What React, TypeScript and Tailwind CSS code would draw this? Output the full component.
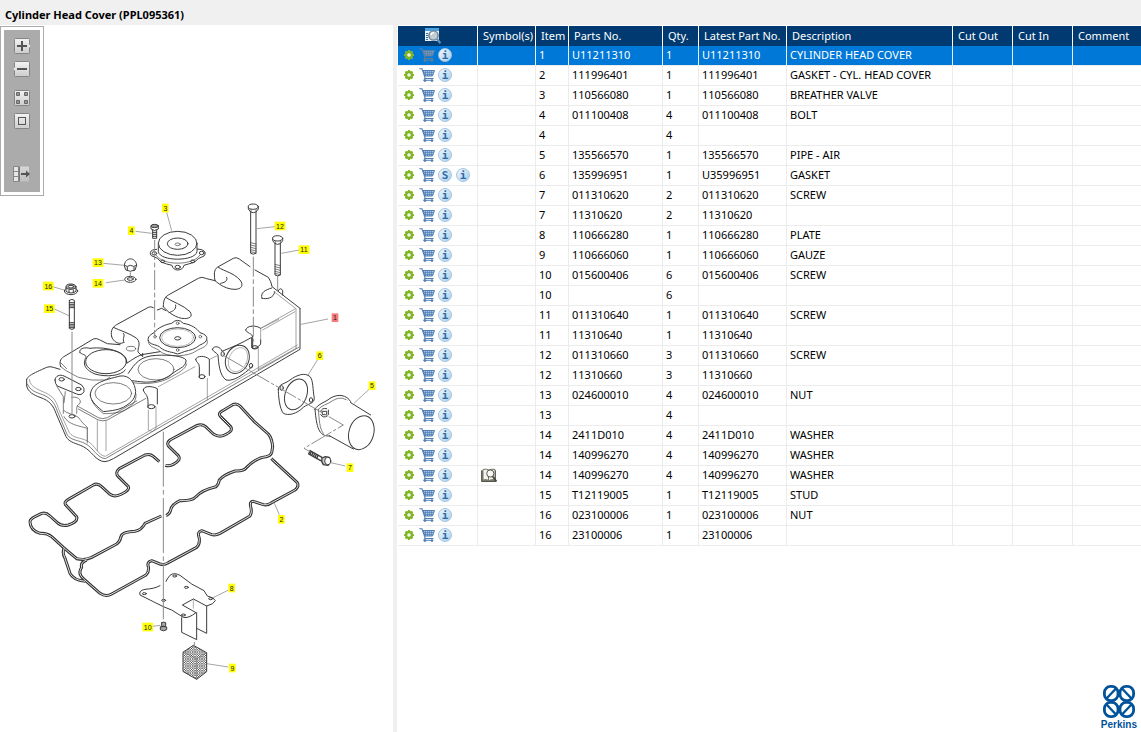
import { useState } from 'react'

type Part = {
  item: string
  partNo: string
  qty: string
  latest: string
  desc: string
  superseded?: boolean
  symbol?: boolean
}

const parts: Part[] = [
  { item: '1', partNo: 'U11211310', qty: '1', latest: 'U11211310', desc: 'CYLINDER HEAD COVER' },
  { item: '2', partNo: '111996401', qty: '1', latest: '111996401', desc: 'GASKET - CYL. HEAD COVER' },
  { item: '3', partNo: '110566080', qty: '1', latest: '110566080', desc: 'BREATHER VALVE' },
  { item: '4', partNo: '011100408', qty: '4', latest: '011100408', desc: 'BOLT' },
  { item: '4', partNo: '', qty: '4', latest: '', desc: '' },
  { item: '5', partNo: '135566570', qty: '1', latest: '135566570', desc: 'PIPE - AIR' },
  { item: '6', partNo: '135996951', qty: '1', latest: 'U35996951', desc: 'GASKET', superseded: true },
  { item: '7', partNo: '011310620', qty: '2', latest: '011310620', desc: 'SCREW' },
  { item: '7', partNo: '11310620', qty: '2', latest: '11310620', desc: '' },
  { item: '8', partNo: '110666280', qty: '1', latest: '110666280', desc: 'PLATE' },
  { item: '9', partNo: '110666060', qty: '1', latest: '110666060', desc: 'GAUZE' },
  { item: '10', partNo: '015600406', qty: '6', latest: '015600406', desc: 'SCREW' },
  { item: '10', partNo: '', qty: '6', latest: '', desc: '' },
  { item: '11', partNo: '011310640', qty: '1', latest: '011310640', desc: 'SCREW' },
  { item: '11', partNo: '11310640', qty: '1', latest: '11310640', desc: '' },
  { item: '12', partNo: '011310660', qty: '3', latest: '011310660', desc: 'SCREW' },
  { item: '12', partNo: '11310660', qty: '3', latest: '11310660', desc: '' },
  { item: '13', partNo: '024600010', qty: '4', latest: '024600010', desc: 'NUT' },
  { item: '13', partNo: '', qty: '4', latest: '', desc: '' },
  { item: '14', partNo: '2411D010', qty: '4', latest: '2411D010', desc: 'WASHER' },
  { item: '14', partNo: '140996270', qty: '4', latest: '140996270', desc: 'WASHER' },
  { item: '14', partNo: '140996270', qty: '4', latest: '140996270', desc: 'WASHER', symbol: true },
  { item: '15', partNo: 'T12119005', qty: '1', latest: 'T12119005', desc: 'STUD' },
  { item: '16', partNo: '023100006', qty: '1', latest: '023100006', desc: 'NUT' },
  { item: '16', partNo: '23100006', qty: '1', latest: '23100006', desc: '' },
]

const columns = ['Symbol(s)', 'Item', 'Parts No.', 'Qty.', 'Latest Part No.', 'Description', 'Cut Out', 'Cut In', 'Comment']

// label, centre x, centre y, leader line
const callouts: [string, number, number, string][] = [
  ['3', 496, 624, 'M500 637L515 692'],
  ['4', 394, 692, 'M407 694L455 700'],
  ['13', 294, 788, 'M310 790L374 796'],
  ['14', 294, 850, 'M318 848L374 840'],
  ['16', 145, 858, 'M158 860L192 870'],
  ['15', 148, 926, 'M163 927L207 947'],
  ['12', 840, 678, 'M770 686L825 680'],
  ['11', 912, 749, 'M844 760L898 750'],
  ['1', 1005, 953, 'M903 973L984 957'],
  ['6', 959, 1067, 'M952 1080L924 1125'],
  ['5', 1116, 1157, 'M1107 1168L1062 1210'],
  ['7', 1050, 1403, 'M992 1388L1036 1398'],
  ['10', 443, 1881, 'M458 1879L481 1876'],
  ['2', 844, 1558, 'M821 1505L838 1544'],
  ['8', 695, 1764, 'M686 1770L637 1794'],
  ['9', 697, 2004, 'M620 1991L685 2001'],
]

function GearIcon() {
  return (
    <svg viewBox="0 0 12 12" className="h-3 w-3" aria-hidden="true">
      <path
        d="M6 1v10M1 6h10M2.5 2.5l7 7M9.5 2.5l-7 7"
        stroke="#8abb2c"
        strokeWidth="2.2"
      />
      <circle cx="6" cy="6" r="3" fill="none" stroke="#7fb226" strokeWidth="2" />
      <circle cx="6" cy="6" r="1.8" fill="#f2f8e4" />
    </svg>
  )
}

function CartIcon({ muted }: { muted: boolean }) {
  const color = muted ? '#5f7f9f' : '#4f7fb5'
  return (
    <svg viewBox="0 0 16 14" className="h-3.5 w-4" fill="none" stroke={color} aria-hidden="true">
      <path d="M4 2.5H15.5L13.5 8H6z" fill={muted ? '#6f9ccc' : '#a9c6e6'} />
      <path d="M6.5 3v5M8.5 3v5M10.5 3v5M12.5 3v5M4.5 4.5h10M5 6.5h9" strokeWidth=".7" />
      <path d="M.3 .8H3L6.3 10.5H14.5M6.3 9.5L5 12.3H14" strokeWidth="1.1" />
      <circle cx="6" cy="12.6" r=".9" fill={color} />
      <circle cx="13" cy="12.6" r=".9" fill={color} />
    </svg>
  )
}

function Badge({ children }: { children: string }) {
  return (
    <span className="flex h-3.5 w-3.5 items-center justify-center rounded-full border border-[#a3c6e2] bg-linear-to-br from-[#f2f8fd] to-[#a9cdea] font-['DejaVu_Sans_Mono','Liberation_Mono',monospace] text-[11px] leading-none font-bold text-[#2c6ca5]">
      {children}
    </span>
  )
}

function LookupIcon() {
  return (
    <svg viewBox="0 0 16 16" className="h-4 w-4" aria-hidden="true">
      <rect x="0" y="0" width="14" height="13" fill="#e8f3fb" />
      <rect x="0" y="0" width="14" height="3" fill="#4aa3df" />
      <path d="M1 5.5h2M1 7.5h2M1 9.5h2M1 11.5h2" stroke="#2d6ca2" />
      <circle cx="8.5" cy="7.5" r="4.6" fill="#c3ccd3" stroke="#6f7f8c" strokeWidth="1.4" />
      <path d="M6 7.2a3 3 0 0 1 3-2.6" stroke="#fff" fill="none" strokeWidth="1.2" />
      <path d="M12 11L15.4 15.2" stroke="#5e93bf" strokeWidth="2.2" />
    </svg>
  )
}

function BookIcon() {
  return (
    <svg viewBox="0 0 17 15" className="h-[15px] w-[17px]" aria-hidden="true">
      <path d="M.6 2.5V13.5H14.5V2.5" fill="#77776d" stroke="#55554c" />
      <path d="M2 1.5Q5 .5 8 2Q11 .5 14 1.5V12Q11 11 8 12.5Q5 11 2 12z" fill="#f4f4ee" stroke="#77776d" />
      <path d="M7.5 2V12" stroke="#77776d" />
      <circle cx="9.3" cy="5.5" r="3.6" fill="#f7f7f7" stroke="#55554c" />
      <path d="M11.7 8.5L15.5 13.5" stroke="#44443c" strokeWidth="1.8" />
    </svg>
  )
}

function ToolButton({ label, children }: { label: string; children: React.ReactNode }) {
  return (
    <button type="button" aria-label={label} className="block h-4 w-[18px] cursor-pointer">
      <svg viewBox="0 0 18 16" className="h-4 w-[18px]" fill="none" aria-hidden="true">
        <defs>
          <linearGradient id="face" x1="0" y1="0" x2="0" y2="1">
            <stop offset="0" stopColor="#f3f3f3" />
            <stop offset="1" stopColor="#cdcdcd" />
          </linearGradient>
        </defs>
        {children}
      </svg>
    </button>
  )
}

const Face = () => <rect x="1.5" y=".5" width="15" height="15" rx="1" fill="url(#face)" stroke="#858585" />

function Toolbar() {
  return (
    <div className="absolute top-px left-0 border border-[#ababab] bg-white p-[3px]">
      <div className="flex w-9 flex-col items-center bg-[#ababab] pt-2 pb-2.5">
        <div className="flex flex-col gap-[7px]">
          <ToolButton label="Zoom in">
            <Face />
            <path d="M9 3v10M4 8h10" stroke="#555" strokeWidth="2" />
            <path d="M16 6l2 2l-2 2" fill="#eee" stroke="#999" strokeWidth=".6" />
          </ToolButton>
          <ToolButton label="Zoom out">
            <Face />
            <path d="M4 8h10" stroke="#555" strokeWidth="2" />
            <path d="M2 6L0 8l2 2" fill="#eee" stroke="#999" strokeWidth=".6" />
          </ToolButton>
        </div>
        <div className="mt-[13px] flex flex-col gap-[7px]">
          <ToolButton label="Fit to window">
            <Face />
            <path d="M3.5 2.5h3v3h-3zM11.5 2.5h3v3h-3zM3.5 10.5h3v3h-3zM11.5 10.5h3v3h-3z" fill="#999" stroke="#666" />
          </ToolButton>
          <ToolButton label="Actual size">
            <Face />
            <rect x="5.5" y="4.5" width="7" height="7" stroke="#555" />
          </ToolButton>
        </div>
        <div className="mt-[37px]">
          <ToolButton label="Hide parts list">
            <path d="M.5 .5h5v15h-5z" fill="#e6e6e6" stroke="#858585" />
            <path d="M.5 5.5h5M.5 10.5h5" stroke="#858585" />
            <path d="M7 .5h9v15H7z" fill="url(#face)" opacity=".6" />
            <path d="M6.5 .5v15" stroke="#777" />
            <path d="M8 8h7" stroke="#555" strokeWidth="2" />
            <path d="M13 4.5L17 8l-4 3.5z" fill="#555" />
          </ToolButton>
        </div>
      </div>
    </div>
  )
}

function Bolt({ x, y, length }: { x: number; y: number; length: number }) {
  const end = y + length
  return (
    <g>
      <path d={`M${x - 8} ${y + 12}V${end}Q${x} ${end + 5} ${x + 8} ${end}V${y + 12}`} fill="#fff" />
      <path
        d={`M${x - 8} ${end - 32}l16 4M${x - 8} ${end - 25}l16 4M${x - 8} ${end - 18}l16 4M${x - 8} ${end - 11}l16 4M${x - 8} ${end - 5}l16 4`}
        strokeWidth="2"
      />
      <path
        d={`M${x - 15} ${y - 4}V${y + 4}L${x - 8} ${y + 13}Q${x} ${y + 17} ${x + 8} ${y + 13}L${x + 15} ${y + 4}V${y - 4}`}
        fill="#fff"
      />
      <path d={`M${x - 7} ${y + 4}V${y + 12}M${x + 8} ${y + 4}V${y + 12}`} strokeWidth="2" />
      <ellipse cx={x} cy={y - 3} rx="15" ry="8" fill="#fff" />
    </g>
  )
}

const upperSeal =
  'M418 -25L400 -41Q390 -50 375 -45L298 -4Q284 8 295 20L325 50Q330 60 305 72Q285 83 270 73L245 50Q232 38 220 45L145 88Q128 98 140 108L170 140Q175 155 145 165Q125 170 112 158L90 138Q78 126 65 130L45 140Q30 147 30 155Q30 180 60 190Q80 188 95 200L130 232L170 266Q195 272 215 262L290 222Q300 215 303 200Q305 186 345 184Q365 180 375 160L424 138M436 -14Q446 -10 460 -17Q485 -30 475 -43L447 -70Q438 -80 450 -90L530 -133Q545 -140 557 -130L580 -108Q600 -95 620 -108Q640 -118 632 -130L602 -160Q592 -170 608 -178L638 -196Q650 -202 660 -192L702 -146L745 -108Q756 -95 758 -70L755 -52Q752 -42 738 -40Q710 -38 680 -8Q672 4 645 3Q610 15 598 30Q595 45 588 50Q545 60 528 80Q518 93 480 92Q455 103 452 120Q450 132 438 137'

const lowerSeal =
  'M132 235Q126 250 135 265L150 310Q160 330 195 334M200 270Q180 278 185 292Q172 310 190 326L240 370Q258 382 275 372L378 315Q388 305 385 290Q380 275 395 272L420 282Q432 286 445 278L530 232Q540 222 538 205Q530 185 545 182L575 194Q587 197 600 190L690 138Q697 128 692 110Q688 94 700 94L730 104Q742 107 755 98L825 60Q838 50 832 38L754 -34'

function HeadCover() {
  return (
    <g fill="none" stroke="#3c3c3c" strokeWidth="3" strokeLinejoin="round" strokeLinecap="round">
      {/* left and front of the casting */}
      <g transform="translate(60 960)">
        <path d="M20 178C24 168 35 162 80 142Q90 138 100 142L120 148M20 178V198C24 215 40 225 60 232C90 242 100 258 108 280L138 350C148 368 170 370 190 380C215 392 228 425 255 425Q265 424 280 416L840 88V-35" />
        <path d="M28 178C30 195 40 202 66 214C95 225 108 238 116 268L148 338C160 355 180 352 200 362C225 374 235 408 256 409L832 75" strokeWidth="2" stroke="#777" />
        <path d="M22 192C30 212 50 218 68 224C92 234 104 248 112 274L142 345C154 362 176 360 196 371C220 383 232 415 256 416L836 82" strokeWidth="2" />
        <path d="M122 140C116 122 124 114 135 108L220 57Q228 53 238 59L262 71L300 74" />
        <path d="M122 140L138 152L175 172L215 180L255 180L270 172M122 128L140 146" strokeWidth="2" />
        <path d="M180 98C175 88 190 80 210 85C235 82 265 84 290 94C312 102 322 115 320 130C338 118 345 112 365 104L420 95" />
        <path d="M180 98C184 104 198 102 198 112C188 130 192 148 225 162C260 172 302 168 316 150" />
        <ellipse cx="258" cy="125" rx="61" ry="36" />
        <ellipse cx="333" cy="86" rx="14" ry="7" strokeWidth="2" />
        <path d="M275 50C270 30 280 20 290 14L385 -38Q392 -42 400 -37M280 22C300 32 330 40 350 55C365 70 352 85 354 96L368 110V100M275 50C280 65 295 75 310 68M312 68C305 55 318 46 310 40" />
        <path d="M105 180C105 168 120 162 132 168L185 195Q195 205 192 215Q185 228 170 222L112 198Q105 192 105 180Z" fill="#fff" />
        <ellipse cx="125" cy="178" rx="8" ry="5" />
        <ellipse cx="175" cy="207" rx="8" ry="5" />
        <path d="M110 198L130 230V280M136 215L132 248M155 232C170 228 185 238 180 250C165 260 172 268 170 280M132 272C140 282 165 282 175 292C185 305 190 312 202 322V365M132 290C145 315 180 318 202 325" strokeWidth="2" />
        <ellipse cx="156" cy="289" rx="9" ry="5" />
        <path d="M172 258L235 293Q248 299 262 293L350 243M175 267L235 300Q248 305 262 300L378 235" strokeWidth="2" />
        <path d="M232 302V392M258 302V392M202 325V370" strokeWidth="2" stroke="#777" />
        <path d="M325 160C345 130 360 108 410 106C450 104 490 108 498 120C500 138 480 145 465 155C440 175 420 184 390 186C360 188 340 180 325 182" fill="#fff" />
        <path d="M330 186C370 196 425 190 455 170C475 158 495 150 500 132" strokeWidth="2" />
        <ellipse cx="408" cy="148" rx="54" ry="32" strokeWidth="2" />
        <path d="M211 225C212 188 255 180 300 168C330 164 345 190 347 215C345 240 330 250 310 262C290 272 265 273 250 275C235 262 211 245 211 225Z" fill="#fff" />
        <path d="M215 240C225 262 240 272 250 281C275 281 300 278 315 270C335 258 350 245 348 222" strokeWidth="2" />
        <ellipse cx="280" cy="220" rx="55" ry="32" strokeWidth="2" />
        <path d="M415 200L525 140M568 118L590 108" strokeWidth="2" stroke="#777" />
        <path d="M370 210C370 198 392 196 412 206V252M370 210C372 222 384 222 384 245V262" />
        <path d="M385 270V330L397 335L408 325V262" stroke="#777" strokeWidth="2" />
        <ellipse cx="394" cy="260" rx="11" ry="6" />
        <path d="M527 118C530 106 556 106 568 118V166M527 118C528 128 538 128 538 140V172" />
        <path d="M562 175V240" stroke="#777" strokeWidth="2" />
        <ellipse cx="546" cy="170" rx="9" ry="6" />
        <path d="M385 62C380 50 395 42 402 38C415 22 435 14 455 10Q473 -8 490 10C515 14 530 25 540 38Q565 45 560 60C555 72 540 72 530 82C515 92 495 92 485 98Q473 106 460 98C445 95 430 92 418 80C405 72 390 75 385 62Z" fill="#fff" />
        <path d="M385 66C388 85 410 82 420 94C440 112 505 112 530 92C545 82 565 82 562 62" strokeWidth="2" />
        <ellipse cx="473" cy="53" rx="54" ry="30" />
        <ellipse cx="473" cy="53" rx="48" ry="26" strokeWidth="1" />
        <ellipse cx="473" cy="55" rx="9" ry="5" />
        <g strokeWidth="2">
          <circle cx="473" cy="10" r="4" />
          <circle cx="405" cy="50" r="4" />
          <circle cx="541" cy="50" r="4" />
          <circle cx="473" cy="90" r="4" />
        </g>
      </g>

      {/* humps along the back edge */}
      <g transform="translate(60 570)">
        <path d="M430 350C430 328 435 322 445 315L535 265Q545 258 560 266L585 272M437 322C455 335 490 345 510 365C520 380 508 388 485 385C460 380 440 362 430 350M467 345C470 360 455 365 447 368M412 360L425 355L438 362" />
      </g>
      <g transform="translate(600 570)">
        <path d="M45 272C40 245 45 235 55 230L100 205Q108 200 118 207L150 230M165 240L205 262Q214 275 216 290L300 355M55 232C75 245 100 248 120 270C132 285 125 298 105 298C80 298 60 285 45 272M80 262C85 275 70 278 62 280" />
        <path d="M186 325C180 308 195 300 215 294M186 325C200 328 222 325 224 305M235 302Q242 290 248 302V315" />
        <path d="M222 305L288 356V475M182 415L285 357M188 420L285 365" strokeWidth="2" stroke="#777" />
        <path d="M137 420C140 405 170 405 182 415M137 420C140 430 158 430 158 442V475" />
      </g>

      {/* outlet face */}
      <g transform="translate(600 960)">
        <path d="M182 25L236 -2M182 25V60M175 85V150M175 148L290 84" strokeWidth="2" stroke="#777" />
        <path d="M37 88C42 74 62 80 66 94C95 82 125 70 155 52V82M156 140C130 165 100 185 78 180C58 165 56 130 54 105C50 98 40 96 37 88M182 60V72Q170 88 158 85" />
        <ellipse cx="112" cy="118" rx="34" ry="44" transform="rotate(25 112 118)" />
        <ellipse cx="114" cy="119" rx="27" ry="38" transform="rotate(25 114 119)" strokeWidth="1" />
        <ellipse cx="68" cy="102" rx="5" ry="7" />
        <ellipse cx="153" cy="137" rx="5" ry="7" />
        <ellipse cx="165" cy="82" rx="9" ry="5" />
      </g>
    </g>
  )
}

function PartsDiagram() {
  return (
    <svg viewBox="0 75 1179 2121" className="block w-full" role="img" aria-label="Exploded view of the cylinder head cover">
      <defs>
        <pattern id="gauze" width="7" height="7" patternUnits="userSpaceOnUse">
          <path d="M0 0L7 7M7 0L0 7" stroke="#333" strokeWidth="1.6" />
        </pattern>
      </defs>

      <HeadCover />

      {/* cover seal: dark band with a light core */}
      <g transform="translate(60 1410)" fill="none" strokeLinejoin="round">
        <path d={upperSeal} stroke="#333" strokeWidth="9" />
        <path d={lowerSeal} stroke="#333" strokeWidth="9" />
        <path d={upperSeal} stroke="#e2e2e2" strokeWidth="3" />
        <path d={lowerSeal} stroke="#e2e2e2" strokeWidth="3" />
      </g>

      <g fill="none" stroke="#3c3c3c" strokeWidth="3" strokeLinejoin="round" strokeLinecap="round">
        {/* breather valve */}
        <g transform="translate(60 570)">
          <path d="M410 178L398 180Q386 186 394 197L412 205Q420 218 440 222L456 226Q460 240 473 240Q488 240 492 226L505 222Q525 220 535 206L552 198Q562 186 545 179L532 177" fill="#fff" />
          <path d="M415 160V185C420 215 525 215 531 185V160" fill="#fff" />
          <path d="M408 195C425 228 520 228 540 195" strokeWidth="2" />
          <ellipse cx="473" cy="160" rx="58" ry="36" fill="#fff" />
          <ellipse cx="473" cy="161" rx="31" ry="17" />
          <ellipse cx="473" cy="163" rx="8" ry="4" strokeWidth="2" />
          <ellipse cx="403" cy="190" rx="7" ry="5" />
          <ellipse cx="545" cy="189" rx="7" ry="5" />
          <ellipse cx="473" cy="231" rx="8" ry="5" />
          <ellipse cx="428" cy="214" rx="6" ry="4" />
          <ellipse cx="518" cy="214" rx="6" ry="4" />
          <path d="M398 120V145H410V120M393 108V117Q404 126 415 117V108M398 127h12M398 133h12M398 139h12" />
          <ellipse cx="404" cy="108" rx="11" ry="5" fill="#999" />

          {/* cap nut and washer */}
          <path d="M313 226C315 200 347 200 350 226L345 240Q331 248 318 240ZM313 226Q322 233 331 226Q342 233 350 226M322 232V242M342 232V242" fill="#fff" />
          <ellipse cx="331" cy="268" rx="17" ry="9" />
          <ellipse cx="331" cy="267" rx="9" ry="4" />

          {/* flanged nut and stud */}
          <ellipse cx="153" cy="303" rx="20" ry="11" fill="#fff" />
          <path d="M138 292V304Q153 314 168 304V292M147 300V308M160 300V308" />
          <ellipse cx="153" cy="290" rx="15" ry="8" fill="#aaa" />
          <ellipse cx="153" cy="290" rx="8" ry="4" fill="#fff" />
          <path d="M148 331V415Q156 422 163 415V331Q156 325 148 331M148 338h15M148 343h15M148 348h15M148 353h15M148 398h15M148 403h15M148 408h15M148 413h15" />
        </g>

        <Bolt x={760} y={623} length={137} />
        <Bolt x={833} y={718} length={107} />

        {/* outlet gasket, air pipe and its screw */}
        <g transform="translate(600 960)">
          <path d="M235 208C235 192 255 192 270 180C290 165 315 156 330 170C340 180 338 210 343 235C342 252 325 250 310 262C290 282 265 288 250 280C238 265 235 225 235 208Z" />
          <ellipse cx="288" cy="223" rx="32" ry="48" transform="rotate(22 288 223)" />
          <ellipse cx="245" cy="204" rx="5" ry="7" />
          <ellipse cx="333" cy="240" rx="5" ry="7" />
          <path d="M345 268C355 250 375 248 390 235C415 220 440 225 452 245L452 330L390 348C355 350 350 320 345 268Z" fill="#fff" />
          <path d="M355 268C365 255 380 255 398 242C415 232 430 232 442 242M355 268C358 300 358 325 370 340" strokeWidth="2" />
          <path d="M440 240L510 285L470 388L388 346C375 330 368 300 375 285" fill="#fff" stroke="none" />
          <path d="M452 248L512 285M388 347L460 387" />
          <ellipse cx="484" cy="338" rx="37" ry="52" transform="rotate(17 484 338)" fill="#fff" />
          <path d="M362 275Q365 262 380 266M385 270V284M362 284Q370 296 382 288M368 274h12v10h-12z" />
          <path d="M330 392L366 412M326 402L362 422M330 392L326 402M334 394l-4 10M339 397l-4 10M344 400l-4 10M349 403l-4 10M354 406l-4 10" strokeWidth="4" />
          <path d="M366 414L376 410L388 412L392 424L384 436L370 434L365 424Z" fill="#ccc" strokeWidth="4" />
          <ellipse cx="383" cy="423" rx="9" ry="11" fill="#fff" />
        </g>

        {/* baffle plate, screw and gauze block */}
        <g transform="translate(60 1410)">
          <path d="M420 347C405 355 395 356 375 358Q355 362 360 375L400 395L430 410L455 420L490 442Q505 446 528 428L487 405L520 387L560 408Q582 402 586 392Q582 382 562 378L552 362L515 342L480 316Q462 306 450 316Q440 328 438 334" fill="#fff" />
          <path d="M485 443V487L530 509V428M560 408V490L530 475" />
          <path d="M520 387V415" stroke="#888" strokeWidth="2" />
          <ellipse cx="464" cy="318" rx="6" ry="3" />
          <ellipse cx="499" cy="352" rx="6" ry="3" />
          <ellipse cx="373" cy="371" rx="6" ry="3" />
          <ellipse cx="431" cy="391" rx="6" ry="3" />
          <ellipse cx="572" cy="386" rx="6" ry="3" />
          <ellipse cx="490" cy="435" rx="6" ry="3" />
          <path d="M425 458V470H437V458Q431 454 425 458M421 471V479Q431 486 440 479V471Q431 466 421 471" fill="#aaa" />
          <path d="M490 546L520 526L560 548V605L530 628L490 605Z" fill="url(#gauze)" />
          <path d="M490 546L530 566L560 548M530 566V628" strokeWidth="1" />
        </g>
      </g>

      {/* assembly axes */}
      <g fill="none" stroke="#8a8a8a" strokeWidth="3">
        <path d="M464 720V1010M760 770V1025" strokeDasharray="60 8 14 8" />
        <path d="M216 995V1245M833 828V870M391 817V828M583 1926V1945" />
        <path d="M490 1295V1865" strokeDasharray="165 10 14 10" />
        <path d="M668 1065L1030 1275L912 1345L930 1355" strokeDasharray="70 6 10 6" />
      </g>

      {callouts.map(([label, x, y, leader]) => {
        const half = label.length > 1 ? 16 : 10
        return (
          <g key={label}>
            <path d={leader} stroke="#777" strokeWidth="2" />
            <rect x={x - half} y={y - 13} width={half * 2} height="26" fill={label === '1' ? '#fa7a7a' : '#ffff00'} />
            <text
              x={x}
              y={y + 8}
              textAnchor="middle"
              fill="#222"
              className="font-['Liberation_Sans',Arial,sans-serif] text-[21px]"
            >
              {label}
            </text>
          </g>
        )
      })}
    </svg>
  )
}

function PerkinsLogo() {
  return (
    <div className="mt-auto mr-1 mb-px flex flex-col items-center self-end text-[#00539b]">
      <svg viewBox="0 0 34 35" className="h-[35px] w-[34px]" fill="none" stroke="currentColor" strokeWidth="2.8" aria-hidden="true">
        <rect x="2.4" y="2.4" width="13.6" height="14.2" rx="6.2" />
        <rect x="18" y="2.4" width="13.6" height="14.2" rx="6.2" />
        <rect x="2.4" y="18.4" width="13.6" height="14.2" rx="6.2" />
        <rect x="18" y="18.4" width="13.6" height="14.2" rx="6.2" />
        <path d="M4.5 14.5L14 4.5M20 4.5L29.5 14.5M4.5 20.5L14 30.5M20 30.5L29.5 20.5" strokeWidth="2.4" />
      </svg>
      <span className="font-['Liberation_Sans',Arial,sans-serif] text-[10px] leading-3 font-bold">Perkins</span>
    </div>
  )
}

function PartsTable() {
  const [selected, setSelected] = useState(0)
  const cell = 'h-5 border-r border-b border-[#ececec] px-[3px] pt-0 pb-px whitespace-nowrap'

  return (
    <table className="mt-px w-full table-fixed border-separate border-spacing-0 text-left text-[11px] leading-4">
      <colgroup>
        <col className="w-20" />
        <col className="w-[58px]" />
        <col className="w-[33px]" />
        <col className="w-[94px]" />
        <col className="w-9" />
        <col className="w-[88px]" />
        <col className="w-[166px]" />
        <col className="w-15" />
        <col className="w-15" />
        <col />
      </colgroup>
      <thead className="bg-[#003a70] text-white">
        <tr>
          <th className="h-5 border-r border-white p-0" scope="col">
            <button type="button" aria-label="Search parts" className="ml-[27px] block cursor-pointer">
              <LookupIcon />
            </button>
          </th>
          {columns.map((name) => (
            <th key={name} scope="col" className="h-5 border-r border-white py-0 pl-[5px] font-normal whitespace-nowrap last:border-r-0">
              {name}
            </th>
          ))}
        </tr>
      </thead>
      <tbody>
        {parts.map((part, i) => (
          <tr
            key={i}
            aria-selected={i === selected}
            onClick={() => setSelected(i)}
            className={i === selected ? 'bg-[#0078d7] text-white' : 'text-black'}
          >
            <td className="h-5 border-r border-b border-[#ececec] pt-0 pr-0 pb-px pl-0.5">
              <div className="flex items-center">
                <button type="button" aria-label="Options" className="flex w-[18px] cursor-pointer justify-center">
                  <GearIcon />
                </button>
                <button type="button" aria-label="Add to cart" className="flex w-[18px] cursor-pointer justify-center">
                  <CartIcon muted={i === selected} />
                </button>
                {part.superseded && (
                  <button type="button" aria-label="Supersession" className="flex w-[18px] cursor-pointer justify-center">
                    <Badge>S</Badge>
                  </button>
                )}
                <button type="button" aria-label="Part information" className="flex w-[18px] cursor-pointer justify-center">
                  <Badge>i</Badge>
                </button>
              </div>
            </td>
            <td className={cell}>{part.symbol && <BookIcon />}</td>
            <td className={cell}>{part.item}</td>
            <td className={cell}>{part.partNo}</td>
            <td className={cell}>{part.qty}</td>
            <td className={cell}>{part.latest}</td>
            <td className={cell}>{part.desc}</td>
            <td className={cell} />
            <td className={cell} />
            <td className="h-5 border-b border-[#ececec] p-0" />
          </tr>
        ))}
      </tbody>
    </table>
  )
}

export default function App() {
  return (
    <div className="flex min-h-screen flex-col bg-white font-['Noto_Sans','Open_Sans',sans-serif]">
      <header className="bg-[#f0f0f0] px-[5px] pt-[7px] pb-0.5">
        <h1 className="text-[11px] leading-4 font-bold text-black">Cylinder Head Cover (PPL095361)</h1>
      </header>
      <main className="flex flex-1">
        <section className="relative min-w-0 flex-[393] border-r-4 border-[#f0f0f0]">
          <PartsDiagram />
          <Toolbar />
        </section>
        <section className="flex min-w-0 flex-[743] flex-col pl-px">
          <PartsTable />
          <PerkinsLogo />
        </section>
      </main>
    </div>
  )
}
